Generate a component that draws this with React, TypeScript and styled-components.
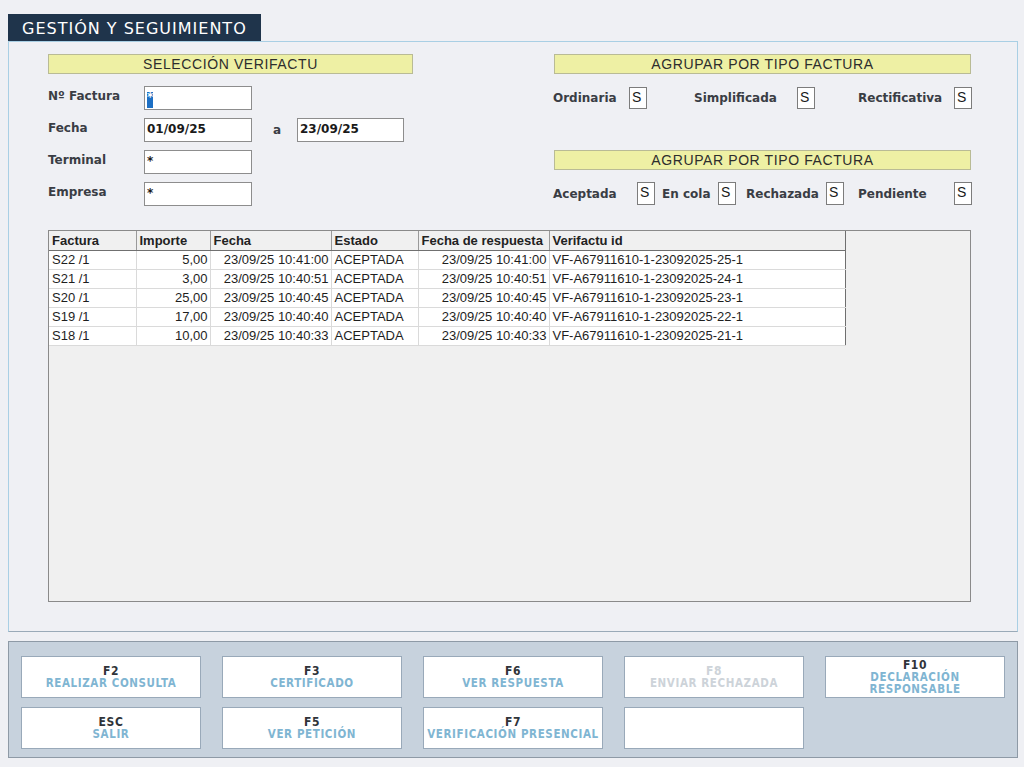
import styled, { createGlobalStyle } from "styled-components";

const GlobalStyle = createGlobalStyle`
  html, body {
    margin: 0;
    padding: 0;
    background: #eff0f4;
  }
  body {
    font-family: "Liberation Sans", Arial, sans-serif;
    color: #2b2b2b;
  }
`;

const Page = styled.div`
  width: 1024px;
  height: 767px;
  box-sizing: border-box;
  padding: 14px 6px 0 8px;
  display: flex;
  flex-direction: column;
`;

const Tab = styled.div`
  width: 253px;
  height: 27px;
  box-sizing: border-box;
  background: #1f344b;
  color: #ffffff;
  font-family: "DejaVu Sans", Verdana, sans-serif;
  font-size: 16px;
  letter-spacing: 1px;
  display: flex;
  align-items: center;
  padding-left: 14px;
  padding-top: 1px;
  white-space: nowrap;
`;

const Panel = styled.div`
  height: 591px;
  box-sizing: border-box;
  border: 1px solid #a9cfe4;
  border-bottom-color: #9aaab8;
  padding: 12px 0 0 39px;
`;

const Top = styled.div`
  height: 176px;
  display: flex;
`;

const LeftBlock = styled.div`
  width: 365px;
`;

const RightBlock = styled.div`
  width: 417px;
  margin-left: 141px;
`;

const SectionHeader = styled.div<{ $top?: number }>`
  height: 20px;
  box-sizing: border-box;
  margin-top: ${(p) => p.$top ?? 0}px;
  background: #eef0a4;
  border: 1px solid #b9bb95;
  font-size: 14px;
  letter-spacing: 0.6px;
  color: #2d2d2d;
  display: flex;
  align-items: center;
  justify-content: center;
`;

const FieldRow = styled.div<{ $top: number }>`
  display: flex;
  align-items: center;
  height: 24px;
  margin-top: ${(p) => p.$top}px;
`;

const Label = styled.span<{ $w: number }>`
  width: ${(p) => p.$w}px;
  flex: none;
  font-family: "DejaVu Sans", Verdana, sans-serif;
  font-weight: bold;
  font-size: 12px;
  color: #3a3d44;
  margin-top: -4px;
`;

const Input = styled.div<{ $w: number }>`
  width: ${(p) => p.$w}px;
  height: 24px;
  box-sizing: border-box;
  background: #fff;
  border: 1px solid #8d8d8d;
  font-family: "DejaVu Sans", Verdana, sans-serif;
  font-weight: bold;
  font-size: 12px;
  color: #1a1a1a;
  padding: 3px 0 0 2px;
  line-height: 14px;
`;

const Selected = styled.span`
  display: inline-block;
  background: #1d6fc4;
  color: #fff;
  width: 6px;
  height: 16px;
  font-size: 12px;
  line-height: 10px;
  text-align: center;
`;

const Between = styled.span`
  width: 45px;
  flex: none;
  padding-left: 21px;
  box-sizing: border-box;
  font-family: "DejaVu Sans", Verdana, sans-serif;
  font-weight: bold;
  font-size: 12px;
  color: #3a3d44;
`;

const OptionRow = styled.div<{ $top: number; $h: number }>`
  display: flex;
  align-items: center;
  margin-top: ${(p) => p.$top}px;
  height: ${(p) => p.$h}px;
`;

const Option = styled.div<{ $gap: number }>`
  display: flex;
  align-items: center;
  margin-left: ${(p) => p.$gap}px;
  height: 100%;
`;

const OptionLabel = styled.span<{ $w: number }>`
  width: ${(p) => p.$w}px;
  font-family: "DejaVu Sans", Verdana, sans-serif;
  font-weight: bold;
  font-size: 12px;
  color: #3a3d44;
  white-space: nowrap;
`;

const Flag = styled.div`
  width: 18px;
  height: 100%;
  box-sizing: border-box;
  background: #fff;
  border: 1px solid #7c7c7c;
  font-size: 14px;
  padding: 1px 0 0 2px;
  color: #1a1a1a;
`;

const TableBox = styled.div`
  width: 923px;
  height: 372px;
  box-sizing: border-box;
  border: 1px solid #8a8a8a;
  background: #f0f0f0;
`;

const Grid = styled.table`
  border-collapse: collapse;
  table-layout: fixed;
  width: 796px;
  background: #fff;
  border-right: 1px solid #6f6f6f;
  border-bottom: 1px solid #6f6f6f;
  font-size: 13px;
`;

const Th = styled.th<{ $w: number }>`
  box-sizing: border-box;
  width: ${(p) => p.$w}px;
  height: 19px;
  padding: 0 2px 0 3px;
  text-align: left;
  font-weight: bold;
  color: #222;
  background: #f0f0f0;
  border-right: 1px solid #9a9a9a;
  border-bottom: 1px solid #707070;
  white-space: nowrap;
  overflow: hidden;
  &:last-child {
    border-right: none;
  }
`;

const Td = styled.td<{ $right?: boolean }>`
  box-sizing: border-box;
  height: 19px;
  padding: 0 2px 0 3px;
  text-align: ${(p) => (p.$right ? "right" : "left")};
  color: #1e1e1e;
  border-right: 1px solid #dadada;
  border-bottom: 1px solid #dadada;
  white-space: nowrap;
  overflow: hidden;
  &:last-child {
    border-right: none;
  }
`;

const Footer = styled.div`
  margin-top: 9px;
  height: 117px;
  box-sizing: border-box;
  background: #c7d2dd;
  border: 1px solid #8e9aa6;
  padding: 14px 0 0 12px;
  display: grid;
  grid-template-columns: repeat(5, 180px);
  grid-auto-rows: 42px;
  column-gap: 21px;
  row-gap: 9px;
`;

const KeyButton = styled.div<{ $disabled?: boolean }>`
  background: #fff;
  border: 1px solid #99a9b9;
  font-family: "DejaVu Sans Condensed", "DejaVu Sans", sans-serif;
  font-weight: bold;
  font-size: 11.5px;
  line-height: 12px;
  letter-spacing: 0.6px;
  display: flex;
  flex-direction: column;
  align-items: center;
  justify-content: center;
  text-align: center;
  & b {
    font-size: 12px;
    color: ${(p) => (p.$disabled ? "#cdd3d9" : "#30343a")};
  }
  & span {
    color: ${(p) => (p.$disabled ? "#cdd3d9" : "#80b5d2")};
  }
`;

const rows = [
  ["S22 /1", "5,00", "23/09/25 10:41:00", "ACEPTADA", "23/09/25 10:41:00", "VF-A67911610-1-23092025-25-1"],
  ["S21 /1", "3,00", "23/09/25 10:40:51", "ACEPTADA", "23/09/25 10:40:51", "VF-A67911610-1-23092025-24-1"],
  ["S20 /1", "25,00", "23/09/25 10:40:45", "ACEPTADA", "23/09/25 10:40:45", "VF-A67911610-1-23092025-23-1"],
  ["S19 /1", "17,00", "23/09/25 10:40:40", "ACEPTADA", "23/09/25 10:40:40", "VF-A67911610-1-23092025-22-1"],
  ["S18 /1", "10,00", "23/09/25 10:40:33", "ACEPTADA", "23/09/25 10:40:33", "VF-A67911610-1-23092025-21-1"],
];

const columns: [string, number][] = [
  ["Factura", 87],
  ["Importe", 74],
  ["Fecha", 121],
  ["Estado", 87],
  ["Fecha de respuesta", 131],
  ["Verifactu id", 296],
];

const rightAligned = [false, true, true, false, true, false];

const buttons: { key: string; label: string[]; disabled?: boolean }[] = [
  { key: "F2", label: ["REALIZAR CONSULTA"] },
  { key: "F3", label: ["CERTIFICADO"] },
  { key: "F6", label: ["VER RESPUESTA"] },
  { key: "F8", label: ["ENVIAR RECHAZADA"], disabled: true },
  { key: "F10", label: ["DECLARACIÓN", "RESPONSABLE"] },
  { key: "ESC", label: ["SALIR"] },
  { key: "F5", label: ["VER PETICIÓN"] },
  { key: "F7", label: ["VERIFICACIÓN PRESENCIAL"] },
  { key: "", label: [] },
];

export default function App() {
  return (
    <>
      <GlobalStyle />
      <Page>
        <Tab>GESTIÓN Y SEGUIMIENTO</Tab>
        <Panel>
          <Top>
            <LeftBlock>
              <SectionHeader>SELECCIÓN VERIFACTU</SectionHeader>
              <FieldRow $top={12}>
                <Label $w={96}>Nº Factura</Label>
                <Input $w={108}>
                  <Selected>*</Selected>
                </Input>
              </FieldRow>
              <FieldRow $top={8}>
                <Label $w={96}>Fecha</Label>
                <Input $w={108}>01/09/25</Input>
                <Between>a</Between>
                <Input $w={107}>23/09/25</Input>
              </FieldRow>
              <FieldRow $top={8}>
                <Label $w={96}>Terminal</Label>
                <Input $w={108}>*</Input>
              </FieldRow>
              <FieldRow $top={8}>
                <Label $w={96}>Empresa</Label>
                <Input $w={108}>*</Input>
              </FieldRow>
            </LeftBlock>
            <RightBlock>
              <SectionHeader>AGRUPAR POR TIPO FACTURA</SectionHeader>
              <OptionRow $top={13} $h={22}>
                <Option $gap={-1}>
                  <OptionLabel $w={76}>Ordinaria</OptionLabel>
                  <Flag>S</Flag>
                </Option>
                <Option $gap={47}>
                  <OptionLabel $w={103}>Simplificada</OptionLabel>
                  <Flag>S</Flag>
                </Option>
                <Option $gap={43}>
                  <OptionLabel $w={96}>Rectificativa</OptionLabel>
                  <Flag>S</Flag>
                </Option>
              </OptionRow>
              <SectionHeader $top={41}>AGRUPAR POR TIPO FACTURA</SectionHeader>
              <OptionRow $top={12} $h={23}>
                <Option $gap={-1}>
                  <OptionLabel $w={84}>Aceptada</OptionLabel>
                  <Flag>S</Flag>
                </Option>
                <Option $gap={7}>
                  <OptionLabel $w={56}>En cola</OptionLabel>
                  <Flag>S</Flag>
                </Option>
                <Option $gap={10}>
                  <OptionLabel $w={80}>Rechazada</OptionLabel>
                  <Flag>S</Flag>
                </Option>
                <Option $gap={14}>
                  <OptionLabel $w={96}>Pendiente</OptionLabel>
                  <Flag>S</Flag>
                </Option>
              </OptionRow>
            </RightBlock>
          </Top>
          <TableBox>
            <Grid>
              <thead>
                <tr>
                  {columns.map(([name, w]) => (
                    <Th key={name} $w={w}>
                      {name}
                    </Th>
                  ))}
                </tr>
              </thead>
              <tbody>
                {rows.map((r) => (
                  <tr key={r[0]}>
                    {r.map((cell, i) => (
                      <Td key={i} $right={rightAligned[i]}>
                        {cell}
                      </Td>
                    ))}
                  </tr>
                ))}
              </tbody>
            </Grid>
          </TableBox>
        </Panel>
        <Footer>
          {buttons.map((b, i) => (
            <KeyButton key={i} $disabled={b.disabled}>
              {b.key && <b>{b.key}</b>}
              {b.label.map((l) => (
                <span key={l}>{l}</span>
              ))}
            </KeyButton>
          ))}
        </Footer>
      </Page>
    </>
  );
}
